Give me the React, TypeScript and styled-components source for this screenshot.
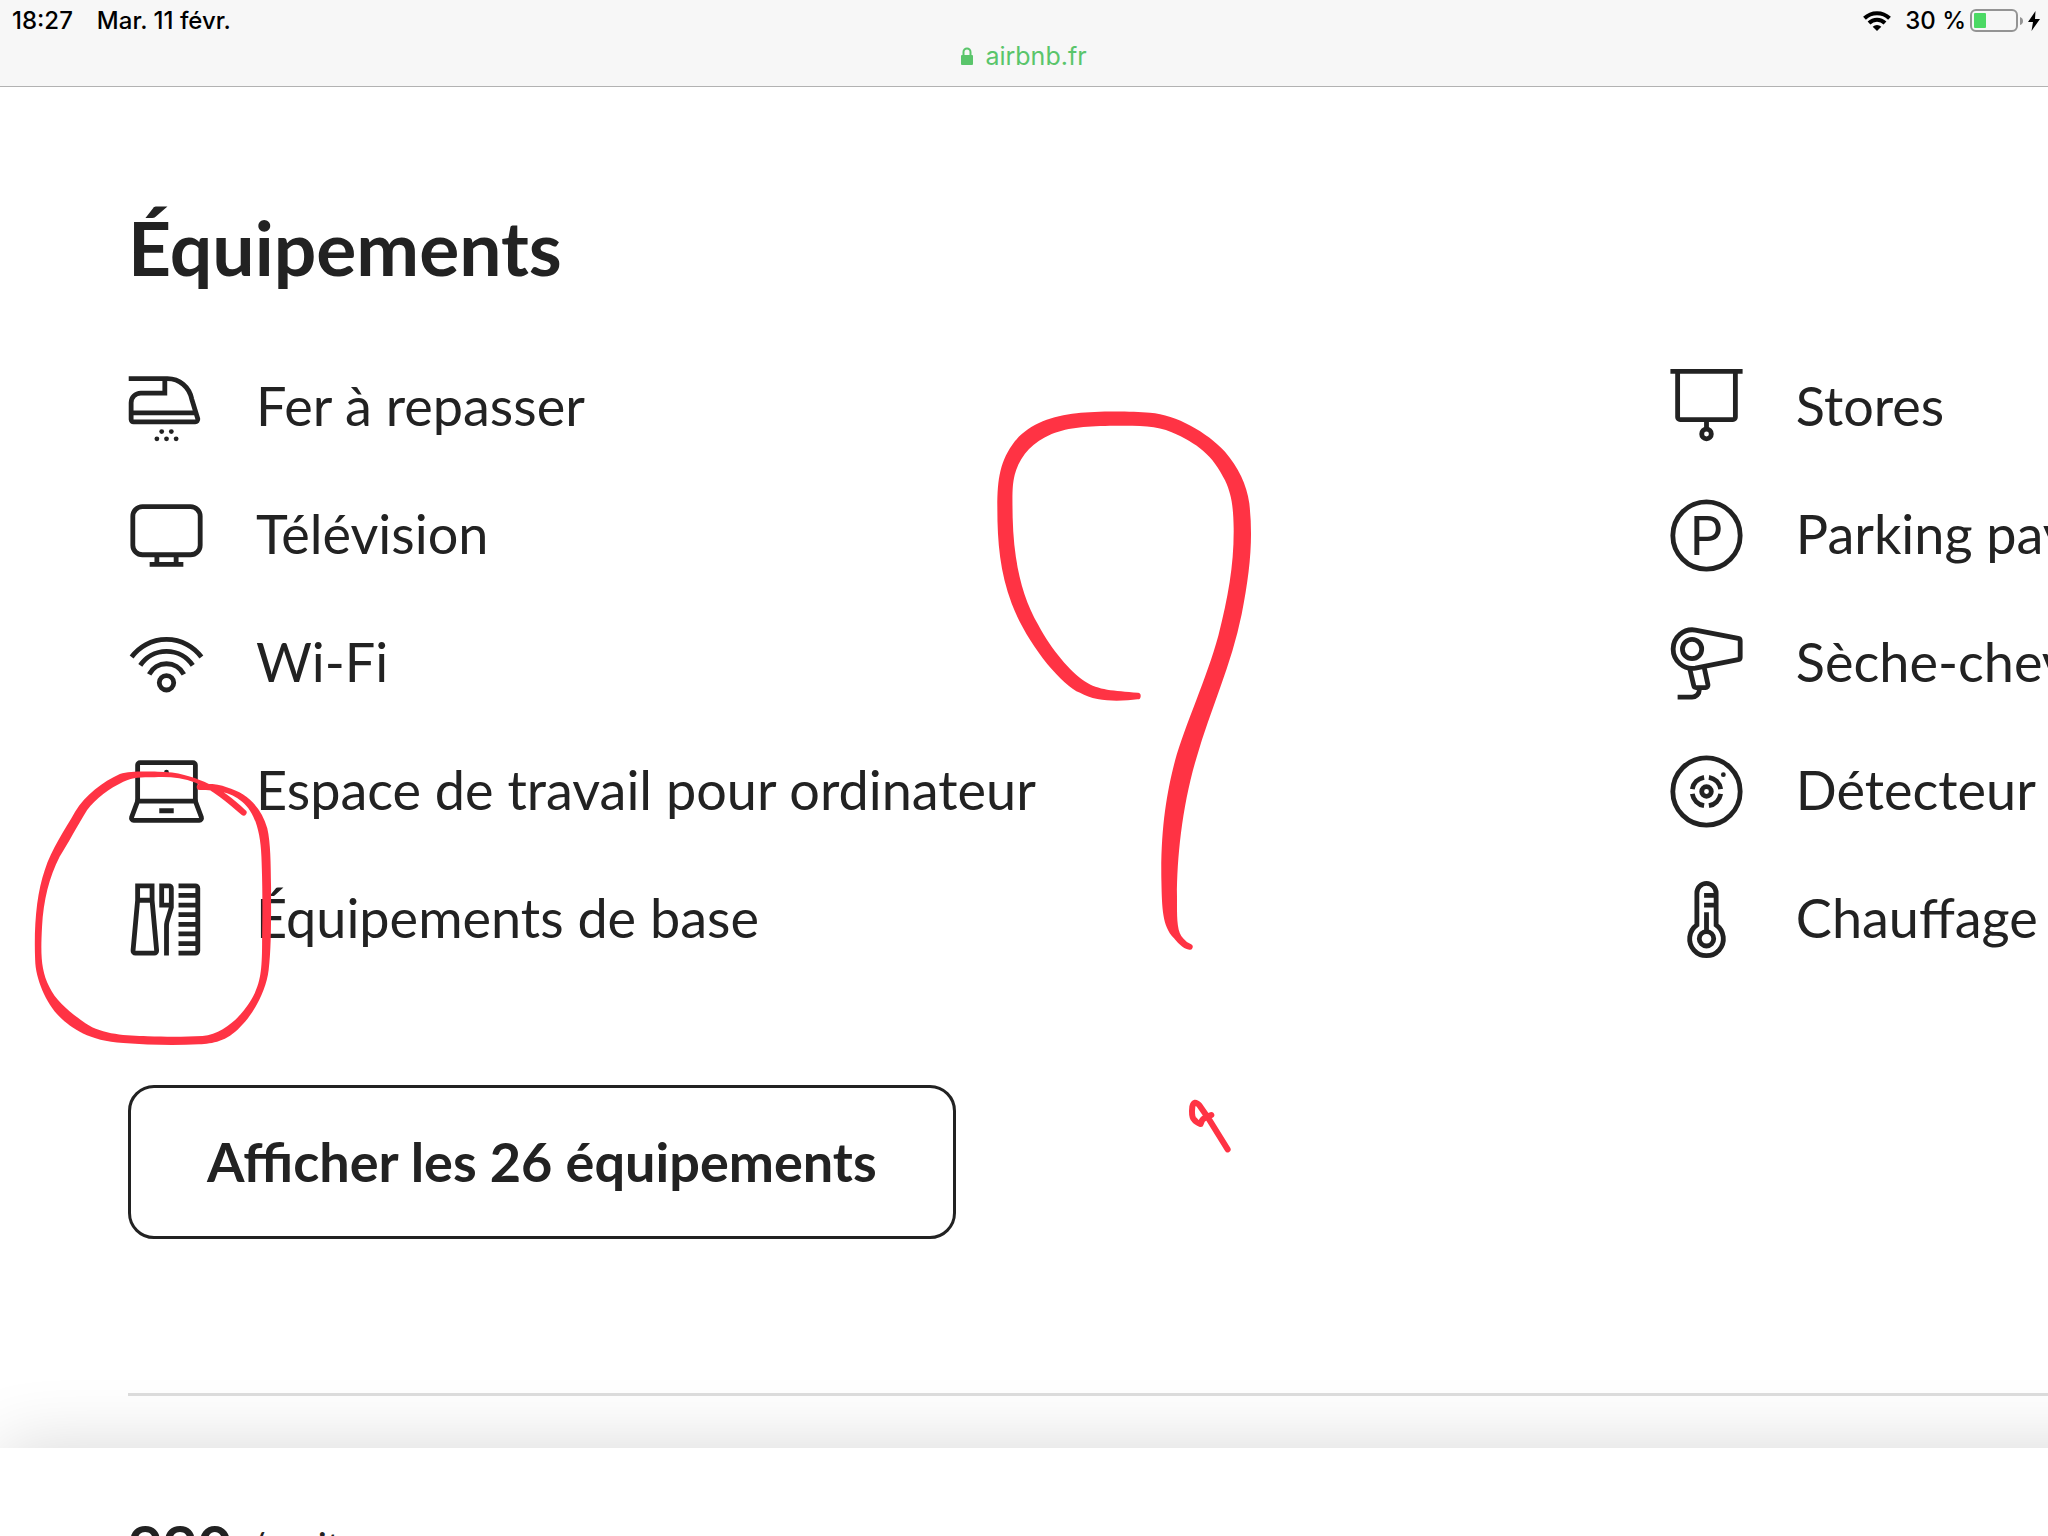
import React from "react";
import styled, { createGlobalStyle } from "styled-components";

const ink = "#222222";
const marker = "#ff3344";
const brandFont = `Lato, "Open Sans", sans-serif`;
const systemFont = `Inter, Roboto, sans-serif`;

const GlobalStyle = createGlobalStyle`
  *, *::before, *::after { box-sizing: border-box; }
  body { margin: 0; background: #ffffff; }
`;

const Page = styled.div`
  position: relative;
  display: flex;
  flex-direction: column;
  height: 100vh;
  overflow: hidden;
  background: #ffffff;
  color: ${ink};
  font-family: ${brandFont};
`;

const BrowserBar = styled.header`
  flex: none;
  height: 87px;
  padding-top: 4px;
  background: #f7f7f7;
  border-bottom: 1px solid #b2b2b2;
  font-family: ${systemFont};
`;

const StatusRow = styled.div`
  display: flex;
  align-items: center;
  justify-content: space-between;
  height: 34px;
  padding: 0 8px 0 12px;
  color: #000000;
  font-size: 24px;
  font-weight: 500;
  line-height: 34px;
`;

const StatusGroup = styled.div<{ $gap: number }>`
  display: flex;
  align-items: center;
  gap: ${(p) => p.$gap}px;
`;

const Percent = styled.span`
  margin-left: 10px;
`;

const Address = styled.a`
  display: flex;
  align-items: center;
  justify-content: center;
  gap: 12px;
  height: 36px;
  color: #5ac56b;
  font-size: 25px;
  line-height: 36px;
  text-decoration: none;
`;

const Main = styled.main`
  flex: 1;
  min-height: 0;
  padding: 114px 0 0 128px;
  overflow: hidden;
`;

const Title = styled.h2`
  margin: 0 0 76px;
  font-size: 75px;
  font-weight: 700;
  line-height: 92px;
`;

const Columns = styled.div`
  display: grid;
  grid-template-columns: repeat(2, 80.2%);
`;

const List = styled.ul`
  display: flex;
  flex-direction: column;
  gap: 51px;
  margin: 0;
  padding: 0;
  list-style: none;
`;

const Item = styled.li`
  display: flex;
  align-items: center;
  gap: 51px;
  height: 77px;
`;

const Label = styled.span`
  padding-bottom: 3px;
  font-size: 54px;
  line-height: 64px;
  white-space: nowrap;
`;

const Glyph = styled.svg`
  flex: none;
  width: 77px;
  height: 77px;
  overflow: visible;
  fill: none;
  stroke: ${ink};
  stroke-width: 2;
`;

const ShowAll = styled.button`
  display: block;
  height: 154px;
  margin: 127px 0 154px;
  padding: 0 76px;
  border: 3px solid ${ink};
  border-radius: 26px;
  background: #ffffff;
  color: ${ink};
  font-family: inherit;
  font-size: 54px;
  font-weight: 700;
  line-height: 64px;
  white-space: nowrap;
`;

const Divider = styled.hr`
  height: 3px;
  margin: 0;
  border: 0;
  background: #dddddd;
`;

const PriceBar = styled.footer`
  flex: none;
  display: flex;
  align-items: flex-start;
  gap: 16px;
  height: 88px;
  margin-right: -160px;
  padding: 62px 0 0 128px;
  background: #ffffff;
  box-shadow: 0 0 72px rgba(0, 0, 0, 0.16);
  font-size: 38px;
  line-height: 72px;
  white-space: nowrap;
`;

const Price = styled.strong`
  font-size: 60px;
  font-weight: 700;
`;

const Mark = styled.svg<{ $x: number; $y: number; $w: number; $h: number }>`
  position: absolute;
  left: ${(p) => p.$x}px;
  top: ${(p) => p.$y}px;
  width: ${(p) => p.$w}px;
  height: ${(p) => p.$h}px;
  fill: ${marker};
  pointer-events: none;
`;

type IconName =
  | "iron" | "tv" | "wifi" | "laptop" | "basics"
  | "blinds" | "parking" | "dryer" | "detector" | "heating";

const icons: Record<IconName, React.ReactNode> = {
  iron: (
    <>
      <path d="M.3 4h16.1c5 0 9.1 3.5 10.1 8.5L29 20.7a1.1 1.1 0 0 1-1.1 1.3H2.3a1 1 0 0 1-1-1v-7a4 4 0 0 1 4-4h10V4M1.3 18.2h27" />
      <g fill={ink} stroke="none">
        <circle cx="14" cy="26" r="1" />
        <circle cx="18" cy="26" r="1" />
        <circle cx="12" cy="29" r="1" />
        <circle cx="16" cy="29" r="1" />
        <circle cx="20" cy="29" r="1" />
      </g>
    </>
  ),
  tv: (
    <>
      <rect x="2" y="4" width="28" height="20" rx="4" />
      <path d="M12 24v4M20 24v4M9 28h14" />
    </>
  ),
  wifi: (
    <>
      <circle cx="16" cy="24" r="3" />
      <path d="M8.8 20.5a8.1 8.1 0 0 1 14.4 0" />
      <path d="M5.1 16.8a13.1 13.1 0 0 1 21.8 0" />
      <path d="M1.5 13.3a18 18 0 0 1 29 0" />
    </>
  ),
  laptop: (
    <>
      <path d="M4 20V5a1 1 0 0 1 1-1h22a1 1 0 0 1 1 1v15" />
      <path d="M4 20h24l2.5 6.7a1 1 0 0 1-.9 1.3H2.4a1 1 0 0 1-.9-1.3zM13 24h6" />
      <circle cx="16" cy="8" r="1" fill={ink} stroke="none" />
    </>
  ),
  basics: (
    <>
      <path d="M4 2h6v6H4zM4 8 2.1 28.9A1 1 0 0 0 3.1 30h7.8a1 1 0 0 0 1-1.1L10 8" />
      <path d="M14 2h3a1 1 0 0 1 1 1v7h-4zM18 10v1l-1.8 6c-.2.7-.2 1-.2 2v12" />
      <path d="M21 2h7a1 1 0 0 1 1 1v26a1 1 0 0 1-1 1h-7M21 6h8M21 10h8M21 14h8M21 18h8M21 22h8M21 26h8" />
    </>
  ),
  blinds: (
    <>
      <path d="M1 1h30M4 1v19a1 1 0 0 0 1 1h22a1 1 0 0 0 1-1V1M16 21v4" />
      <circle cx="16" cy="27" r="2" />
    </>
  ),
  parking: (
    <>
      <circle cx="16" cy="16" r="14" />
      <text x="9" y="24" fill={ink} stroke="none" fontFamily="Inter, sans-serif" fontSize="22" fontWeight="400">
        P
      </text>
    </>
  ),
  dryer: (
    <>
      <circle cx="10" cy="10" r="4" />
      <path d="M11.4 2.1 29.2 5.6a1 1 0 0 1 .8 1v6.8a1 1 0 0 1-.8 1l-17.8 3.5A8 8 0 1 1 11.4 2.1z" />
      <path d="m9 18 1.7 7.2a1 1 0 0 0 1 .8h3.9a1 1 0 0 0 1-1.2L15 17.5M13 26v1a3 3 0 0 1-3 3H4" />
    </>
  ),
  detector: (
    <>
      <circle cx="16" cy="16" r="14" />
      <path d="M17 10.1a6 6 0 0 1 4.9 4.9M21.9 17a6 6 0 0 1-4.9 4.9M15 21.9a6 6 0 0 1-4.9-4.9M10.1 15a6 6 0 0 1 4.9-4.9" />
      <circle cx="16" cy="16" r="2" />
      <circle cx="23" cy="9" r="1" fill={ink} stroke="none" />
    </>
  ),
  heating: (
    <>
      <path d="M12 18.3V5a4 4 0 0 1 8 0v13.3a7 7 0 1 1-8 0zM16 13v8M15 6h5M15 10h5" />
      <circle cx="16" cy="24" r="3" />
    </>
  ),
};

const leftItems: { icon: IconName; label: string }[] = [
  { icon: "iron", label: "Fer à repasser" },
  { icon: "tv", label: "Télévision" },
  { icon: "wifi", label: "Wi-Fi" },
  { icon: "laptop", label: "Espace de travail pour ordinateur" },
  { icon: "basics", label: "Équipements de base" },
];

const rightItems: { icon: IconName; label: string }[] = [
  { icon: "blinds", label: "Stores" },
  { icon: "parking", label: "Parking payant" },
  { icon: "dryer", label: "Sèche-cheveux" },
  { icon: "detector", label: "Détecteur" },
  { icon: "heating", label: "Chauffage" },
];

function Amenities({ items }: { items: { icon: IconName; label: string }[] }) {
  return (
    <List>
      {items.map((item) => (
        <Item key={item.icon}>
          <Glyph viewBox="0 0 32 32" aria-hidden="true">
            {icons[item.icon]}
          </Glyph>
          <Label>{item.label}</Label>
        </Item>
      ))}
    </List>
  );
}

export default function App() {
  return (
    <Page>
      <GlobalStyle />
      <BrowserBar>
        <StatusRow>
          <StatusGroup $gap={24}>
            <span>18:27</span>
            <span>Mar. 11 févr.</span>
          </StatusGroup>
          <StatusGroup $gap={4}>
            <svg width="28" height="20" viewBox="0 0 28 20" fill="none" stroke="#000" strokeWidth="4" aria-hidden="true">
              <path d="M1.5 7.2a18 18 0 0 1 25 0M6 12a11.5 11.5 0 0 1 16 0" />
              <path d="M14 20l-4.3-4.3a6.2 6.2 0 0 1 8.6 0z" fill="#000" stroke="none" />
            </svg>
            <Percent>30 %</Percent>
            <svg width="54" height="24" viewBox="0 0 54 24" aria-hidden="true">
              <rect x="1" y="1" width="46" height="21" rx="5" fill="none" stroke="#949494" strokeWidth="2" />
              <rect x="4" y="4" width="12" height="15" rx="1" fill="#4cd964" />
              <path d="M50 8q3 1 3 4t-3 4z" fill="#949494" />
            </svg>
            <svg width="12" height="20" viewBox="0 0 12 20" aria-hidden="true">
              <path d="M7.5 0 0 11h5L3.5 20 12 8H7z" fill="#000" />
            </svg>
          </StatusGroup>
        </StatusRow>
        <Address href="#airbnb">
          <svg width="12" height="18" viewBox="0 0 12 18" aria-hidden="true">
            <path d="M2.5 9V5a3.5 3.5 0 0 1 7 0v4" fill="none" stroke="#5ac56b" strokeWidth="2" />
            <rect y="8" width="12" height="10" rx="1" fill="#5ac56b" />
          </svg>
          airbnb.fr
        </Address>
      </BrowserBar>

      <Main>
        <Title>Équipements</Title>
        <Columns>
          <Amenities items={leftItems} />
          <Amenities items={rightItems} />
        </Columns>
        <ShowAll type="button">Afficher les 26 équipements</ShowAll>
        <Divider />
      </Main>

      <PriceBar>
        <Price>990</Price>
        <span>/ nuit</span>
      </PriceBar>

      <Mark $x={20} $y={740} $w={540} $h={320} viewBox="0 0 1568 960" preserveAspectRatio="none" aria-hidden="true">
        <path d="M522 132Q570 128 600 142C660 160 700 200 718 265C728 310 728 370 729 440C729 540 730 620 722 690C715 750 680 820 640 860C600 905 560 910 520 913C450 916 370 915 300 909C200 902 150 865 115 830C75 790 45 715 44 660C40 560 48 460 72 390C92 325 130 270 160 215C190 165 240 125 290 102C320 92 370 95 400 95C460 95 500 110 535 125C580 145 620 175 654 210A8 8 0 0 1 644 225C600 185 560 150 510 128C470 112 430 110 390 112C350 112 330 112 300 125C260 145 220 175 195 210C165 260 140 310 115 350C85 410 68 480 64 560C60 640 60 690 85 740C105 785 150 820 190 850C240 885 310 887 370 889C430 891 480 891 530 888C590 883 640 830 665 790C700 735 703 690 703 600C704 520 705 450 701 350C698 270 680 215 645 185C610 155 570 150 522 150A9 9 0 0 1 522 132Z" />
      </Mark>
      <Mark $x={980} $y={400} $w={290} $h={560} viewBox="0 0 870 1568" preserveAspectRatio="none" aria-hidden="true">
        <path d="M472 838C430 843 350 848 300 820C240 795 140 680 95 570C60 480 52 400 52 300C52 220 60 170 105 115C150 65 215 45 290 37C350 31 450 31 510 36C590 42 680 90 735 145C775 190 800 235 808 290C820 390 810 480 785 600C755 740 690 870 650 1000C605 1140 590 1290 591 1400C591 1450 590 1490 610 1508Q618 1518 632 1523A8 8 0 0 1 628 1539C605 1535 595 1520 575 1500C545 1465 546 1410 544 1340C542 1200 560 1100 585 1010C615 910 680 780 715 660C745 550 762 460 761 360C760 300 755 265 735 225C700 155 650 120 575 90C530 72 480 72 405 72C320 73 270 76 215 95C155 120 120 155 104 210C96 240 97 270 98 330C101 450 125 550 175 630C215 700 270 760 315 788C355 813 400 813 474 820A9 9 0 0 1 472 838Z" />
      </Mark>
      <Mark $x={1170} $y={1080} $w={90} $h={90} viewBox="0 0 270 270" aria-hidden="true">
        <path
          d="M173 208L112 110L88 76Q72 58 67 80Q64 106 70 116Q78 128 92 132Q94 118 108 112L124 105"
          fill="none"
          stroke={marker}
          strokeWidth="18"
          strokeLinecap="round"
          strokeLinejoin="round"
        />
      </Mark>
    </Page>
  );
}
